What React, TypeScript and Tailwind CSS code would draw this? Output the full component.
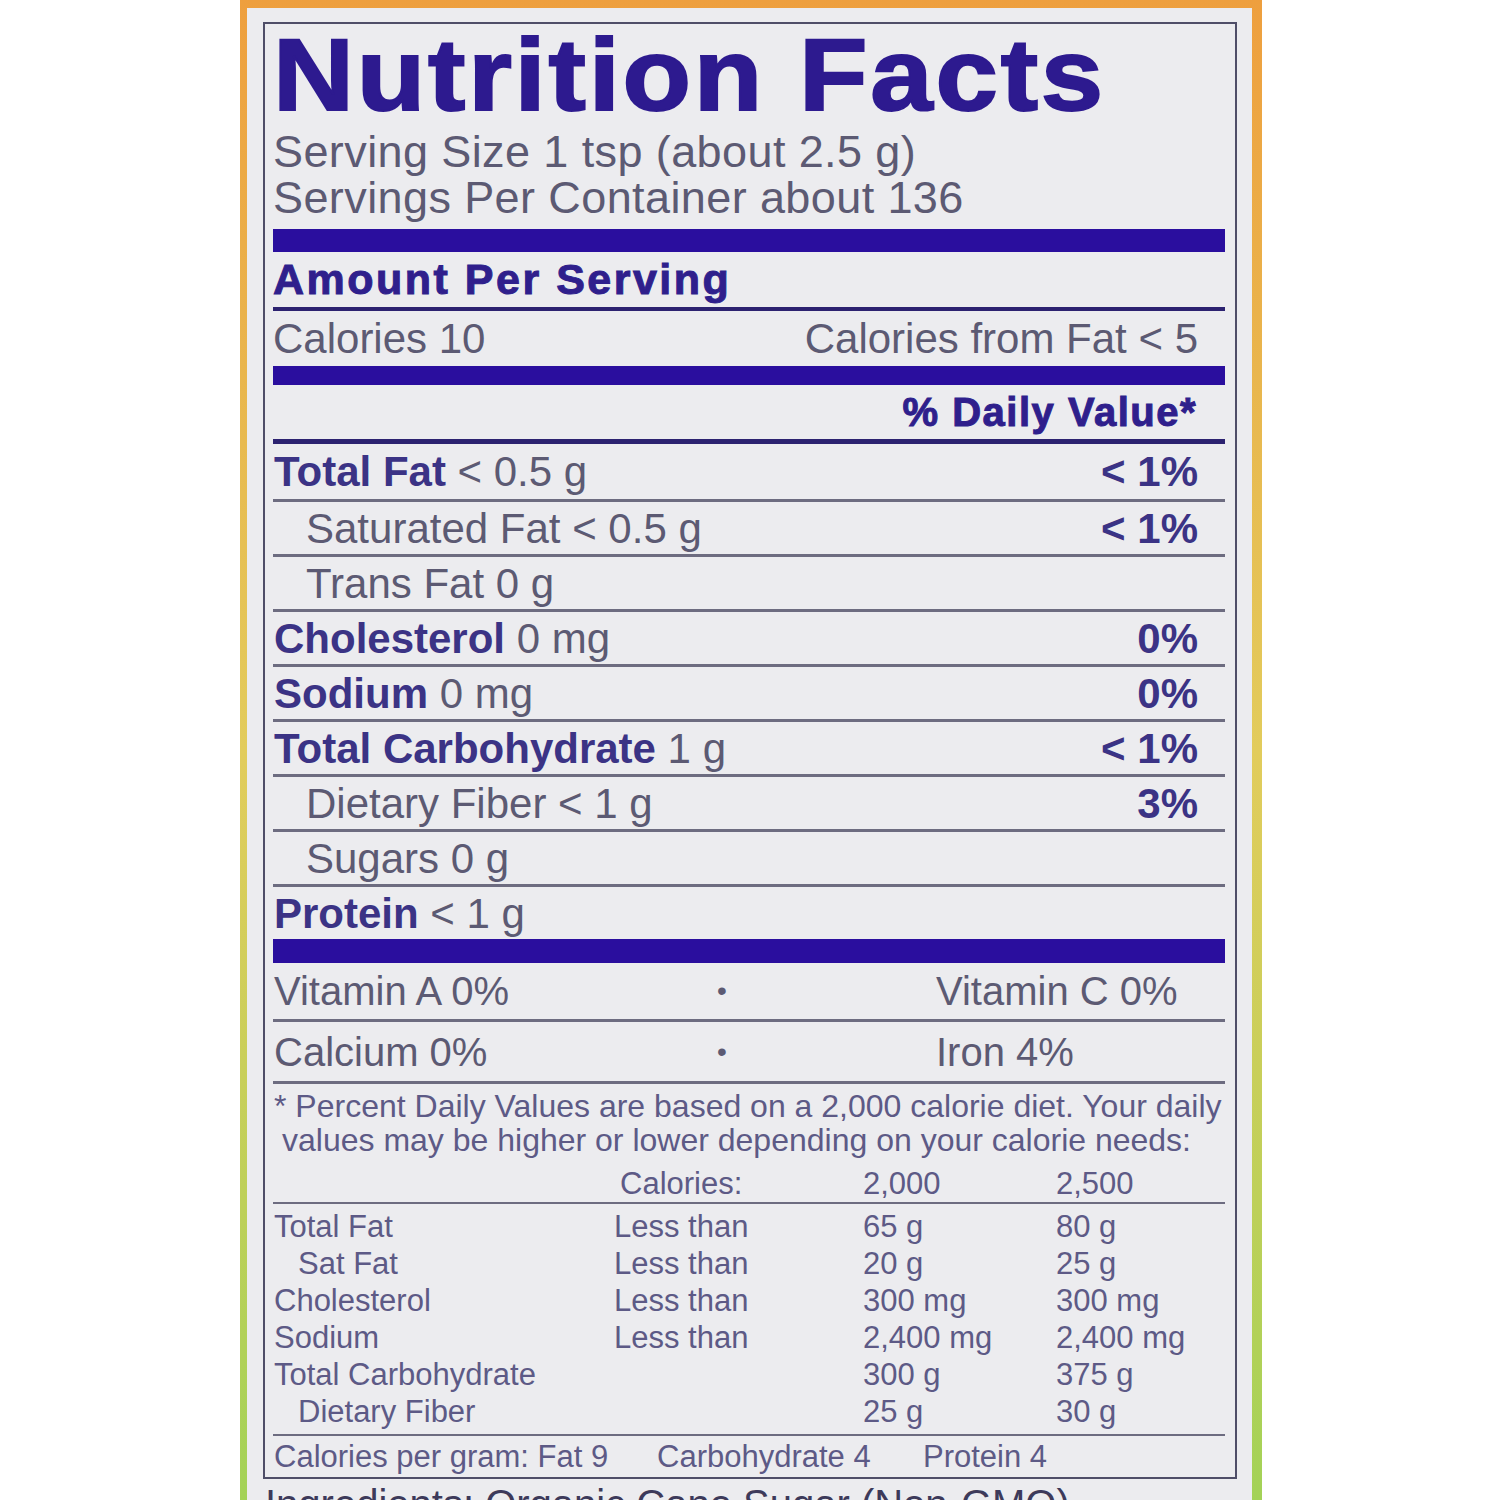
type Nutrient = {
  label: string;
  amount: string;
  dv?: string;
  bold?: boolean;
  indent?: boolean;
};

const nutrients: Nutrient[] = [
  { label: "Total Fat", amount: "< 0.5 g", dv: "< 1%", bold: true },
  { label: "Saturated Fat", amount: "< 0.5 g", dv: "< 1%", indent: true },
  { label: "Trans Fat", amount: "0 g", indent: true },
  { label: "Cholesterol", amount: "0 mg", dv: "0%", bold: true },
  { label: "Sodium", amount: "0 mg", dv: "0%", bold: true },
  { label: "Total Carbohydrate", amount: "1 g", dv: "< 1%", bold: true },
  { label: "Dietary Fiber", amount: "< 1 g", dv: "3%", indent: true },
  { label: "Sugars", amount: "0 g", indent: true },
  { label: "Protein", amount: "< 1 g", bold: true },
];

const dailyRows = [
  { label: "Total Fat", less: "Less than", a: "65 g", b: "80 g" },
  { label: "Sat Fat", less: "Less than", a: "20 g", b: "25 g", indent: true },
  { label: "Cholesterol", less: "Less than", a: "300 mg", b: "300 mg" },
  { label: "Sodium", less: "Less than", a: "2,400 mg", b: "2,400 mg" },
  { label: "Total Carbohydrate", less: "", a: "300 g", b: "375 g" },
  { label: "Dietary Fiber", less: "", a: "25 g", b: "30 g", indent: true },
];

export default function App() {
  return (
    <div className="h-[1500px] w-full overflow-hidden bg-white font-['Liberation_Sans',Arial,sans-serif]">
      {/* product edge: orange at the top, green lower down */}
      <div className="ml-[240px] h-[1500px] w-[1022px] bg-linear-to-b from-[#ee9f3e] via-[#e2cc5c] to-[#a3d257] pl-[7px] pr-[10px] pt-[8px]">
        <div className="h-full bg-[#ececef] pl-[16px] pr-[15px] pt-[14px]">
          <div className="border-2 border-[#4f4e68] pl-[8px] pr-[10px]">
            <h1 className="h-[102px] origin-left scale-x-[1.1] whitespace-nowrap text-[102px] font-bold leading-[102px] tracking-[2.5px] text-[#2d1a8f] [-webkit-text-stroke:2px_#2d1a8f]">
              Nutrition Facts
            </h1>
            <div className="mt-[3px] text-[45px] leading-[46px] tracking-[0.4px] text-[#5c5a73]">
              <div>Serving Size 1 tsp (about 2.5 g)</div>
              <div>Servings Per Container about 136</div>
            </div>

            <div className="mt-[8px] h-[23px] bg-[#2a0e9e]" />
            <div className="h-[55px] text-[43px] font-bold leading-[55px] tracking-[2.5px] text-[#2f1f8c] [-webkit-text-stroke:1px_#2f1f8c]">
              Amount Per Serving
            </div>
            <div className="h-[4px] bg-[#2c2270]" />
            <div className="flex h-[55px] items-center justify-between pr-[27px] text-[42px] text-[#5c5a73]">
              <span>Calories 10</span>
              <span>Calories from Fat &lt; 5</span>
            </div>
            <div className="h-[19px] bg-[#2a0e9e]" />
            <div className="flex h-[54px] items-center justify-end pr-[28px] text-[40px] font-bold tracking-[1.5px] text-[#2f1f8c] [-webkit-text-stroke:1px_#2f1f8c]">
              % Daily Value*
            </div>
            <div className="h-[5px] bg-[#2c2270]" />

            {nutrients.map((n, i) => (
              <div
                key={n.label}
                className={`flex items-center justify-between pr-[27px] text-[42px] text-[#5c5a73] ${
                  i === 0 ? "h-[55px]" : "h-[55px] border-t-[3px] border-[#6d6c80]"
                } ${n.indent ? "pl-[33px]" : "pl-px"}`}
              >
                <span>
                  {n.bold ? (
                    <span className="font-bold text-[#3b3385]">{n.label}</span>
                  ) : (
                    n.label
                  )}{" "}
                  {n.amount}
                </span>
                {n.dv && <span className="font-bold text-[#3b3385]">{n.dv}</span>}
              </div>
            ))}

            <div className="h-[24px] bg-[#2a0e9e]" />
            <div className="flex h-[56px] items-center text-[40px] text-[#5c5a73]">
              <span className="w-[437px] pl-px">Vitamin A 0%</span>
              <span className="w-[24px] text-center text-[28px]">•</span>
              <span className="pl-[202px]">Vitamin C 0%</span>
            </div>
            <div className="flex h-[62px] items-center border-t-[3px] border-[#6d6c80] text-[40px] text-[#5c5a73]">
              <span className="w-[437px] pl-px">Calcium 0%</span>
              <span className="w-[24px] text-center text-[28px]">•</span>
              <span className="pl-[202px]">Iron 4%</span>
            </div>

            <div className="border-t-[3px] border-[#6d6c80] pb-[8px] pt-[5px] text-[32px] leading-[34px] text-[#5d5a86]">
              <div className="whitespace-nowrap pl-px">
                * Percent Daily Values are based on a 2,000 calorie diet. Your daily
              </div>
              <div className="whitespace-nowrap pl-[9px]">
                values may be higher or lower depending on your calorie needs:
              </div>
            </div>

            <div className="text-[31px] leading-[37px] text-[#5d5a86]">
              <div className="grid h-[39px] grid-cols-[341px_249px_193px_1fr] border-b-2 border-[#6d6c80]">
                <span />
                <span className="pl-[6px]">Calories:</span>
                <span>2,000</span>
                <span>2,500</span>
              </div>
              <div className="pb-[4px] pt-[4px]">
                {dailyRows.map((r) => (
                  <div key={r.label} className="grid h-[37px] grid-cols-[341px_249px_193px_1fr]">
                    <span className={r.indent ? "pl-[25px]" : "pl-px"}>{r.label}</span>
                    <span>{r.less}</span>
                    <span>{r.a}</span>
                    <span>{r.b}</span>
                  </div>
                ))}
              </div>
              <div className="flex h-[43px] border-t-2 border-[#6d6c80] pb-[4px] pt-[2px]">
                <span className="w-[384px] pl-px">Calories per gram: Fat 9</span>
                <span className="w-[266px]">Carbohydrate 4</span>
                <span>Protein 4</span>
              </div>
            </div>
          </div>

          <div className="mt-[5px] whitespace-nowrap pl-[2px] text-[40px] leading-[40px] text-[#3d3a5a]">
            Ingredients: Organic Cane Sugar (Non-GMO)
          </div>
        </div>
      </div>
    </div>
  );
}
